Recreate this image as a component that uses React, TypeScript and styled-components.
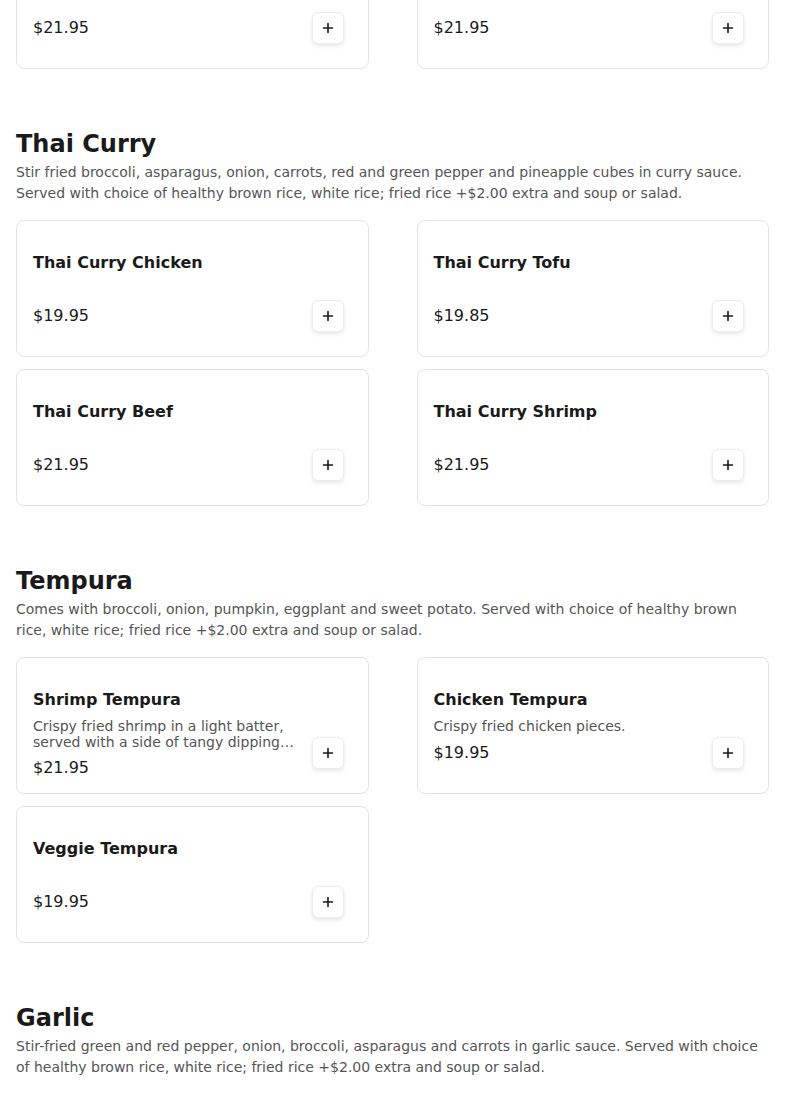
import React, { FC } from "react"
import styled, { createGlobalStyle } from "styled-components"

interface Item {
  name: string
  price: string
  desc?: string
}

interface Section {
  title: string
  desc: string
  items: Item[]
}

const previous: Item[] = [
  { name: "Pad Thai Beef", price: "$21.95" },
  { name: "Pad Thai Shrimp", price: "$21.95" },
]

const sections: Section[] = [
  {
    title: "Thai Curry",
    desc:
      "Stir fried broccoli, asparagus, onion, carrots, red and green pepper and pineapple cubes in curry sauce. Served with choice of healthy brown rice, white rice; fried rice +$2.00 extra and soup or salad.",
    items: [
      { name: "Thai Curry Chicken", price: "$19.95" },
      { name: "Thai Curry Tofu", price: "$19.85" },
      { name: "Thai Curry Beef", price: "$21.95" },
      { name: "Thai Curry Shrimp", price: "$21.95" },
    ],
  },
  {
    title: "Tempura",
    desc:
      "Comes with broccoli, onion, pumpkin, eggplant and sweet potato. Served with choice of healthy brown rice, white rice; fried rice +$2.00 extra and soup or salad.",
    items: [
      {
        name: "Shrimp Tempura",
        price: "$21.95",
        desc: "Crispy fried shrimp in a light batter, served with a side of tangy dipping sauce.",
      },
      { name: "Chicken Tempura", price: "$19.95", desc: "Crispy fried chicken pieces." },
      { name: "Veggie Tempura", price: "$19.95" },
    ],
  },
  {
    title: "Garlic",
    desc:
      "Stir-fried green and red pepper, onion, broccoli, asparagus and carrots in garlic sauce. Served with choice of healthy brown rice, white rice; fried rice +$2.00 extra and soup or salad.",
    items: [],
  },
]

const PlusIcon = () => (
  <svg width="12" height="12" viewBox="0 0 12 12" fill="none">
    <path d="M6 1.5v9M1.5 6h9" stroke="#1a1a1a" strokeWidth="1.6" strokeLinecap="round" />
  </svg>
)

const MenuCard: FC<{ item: Item }> = ({ item }) => (
  <Card>
    <Info>
      <Name>{item.name}</Name>
      <Desc>{item.desc || ""}</Desc>
      <Price>{item.price}</Price>
    </Info>
    <AddButton aria-label={`Add ${item.name}`}>
      <PlusIcon />
    </AddButton>
  </Card>
)

export default function App() {
  return (
    <>
      <GlobalStyle />
      <Page>
        <Grid $first>
          {previous.map(it => (
            <MenuCard key={it.name} item={it} />
          ))}
        </Grid>
        {sections.map(s => (
          <SectionBlock key={s.title}>
            <Heading>{s.title}</Heading>
            <SectionDesc>{s.desc}</SectionDesc>
            {s.items.length > 0 && (
              <Grid>
                {s.items.map(it => (
                  <MenuCard key={it.name} item={it} />
                ))}
              </Grid>
            )}
          </SectionBlock>
        ))}
      </Page>
    </>
  )
}

//---------------------------STYLES-------------------------------------------//

const GlobalStyle = createGlobalStyle`
  html, body {
    margin: 0;
    padding: 0;
    background: #ffffff;
    overflow: hidden;
  }
  body {
    font-family: "DejaVu Sans", sans-serif;
    color: #1a1a1a;
  }
  * { box-sizing: border-box; }
`

const Page = styled.div`
  padding: 0 16px;
  height: 1093px;
  overflow: hidden;
`

const Grid = styled.div<{ $first?: boolean }>`
  display: grid;
  grid-template-columns: 1fr 1fr;
  column-gap: 48px;
  row-gap: 12px;
  margin-top: ${p => (p.$first ? "-68px" : "0")};
`

const SectionBlock = styled.section`
  margin-top: 59px;
`

const Heading = styled.h2`
  margin: 0 0 2px;
  font-size: 24px;
  line-height: 32px;
  font-weight: 700;
  color: #1a1a1a;
`

const SectionDesc = styled.p`
  margin: 0 0 16px;
  font-size: 14px;
  line-height: 21px;
  color: #555555;
`

const Card = styled.div`
  height: 137px;
  display: flex;
  justify-content: space-between;
  padding: 30px 24px 24px 16px;
  border: 1px solid #e3e3e3;
  border-radius: 8px;
  background: #ffffff;
  overflow: hidden;
`

const Info = styled.div`
  display: flex;
  flex-direction: column;
  min-width: 0;
  padding-right: 12px;

  & > * {
    flex-shrink: 0;
  }
`

const Name = styled.div`
  font-size: 16px;
  line-height: 24px;
  font-weight: 700;
  color: #1a1a1a;
`

const Desc = styled.div`
  margin-top: 6px;
  min-height: 17px;
  font-size: 14px;
  line-height: 16px;
  color: #555555;
  display: -webkit-box;
  -webkit-line-clamp: 2;
  -webkit-box-orient: vertical;
  overflow: hidden;
`

const Price = styled.div`
  margin-top: 6px;
  font-size: 16px;
  line-height: 24px;
  color: #1a1a1a;
`

const AddButton = styled.button`
  flex: none;
  align-self: flex-end;
  width: 32px;
  height: 32px;
  padding: 0;
  display: flex;
  align-items: center;
  justify-content: center;
  background: #ffffff;
  border: 1px solid #ececec;
  border-radius: 6px;
  box-shadow: 0 2px 4px rgba(0, 0, 0, 0.1);
  cursor: pointer;
`
